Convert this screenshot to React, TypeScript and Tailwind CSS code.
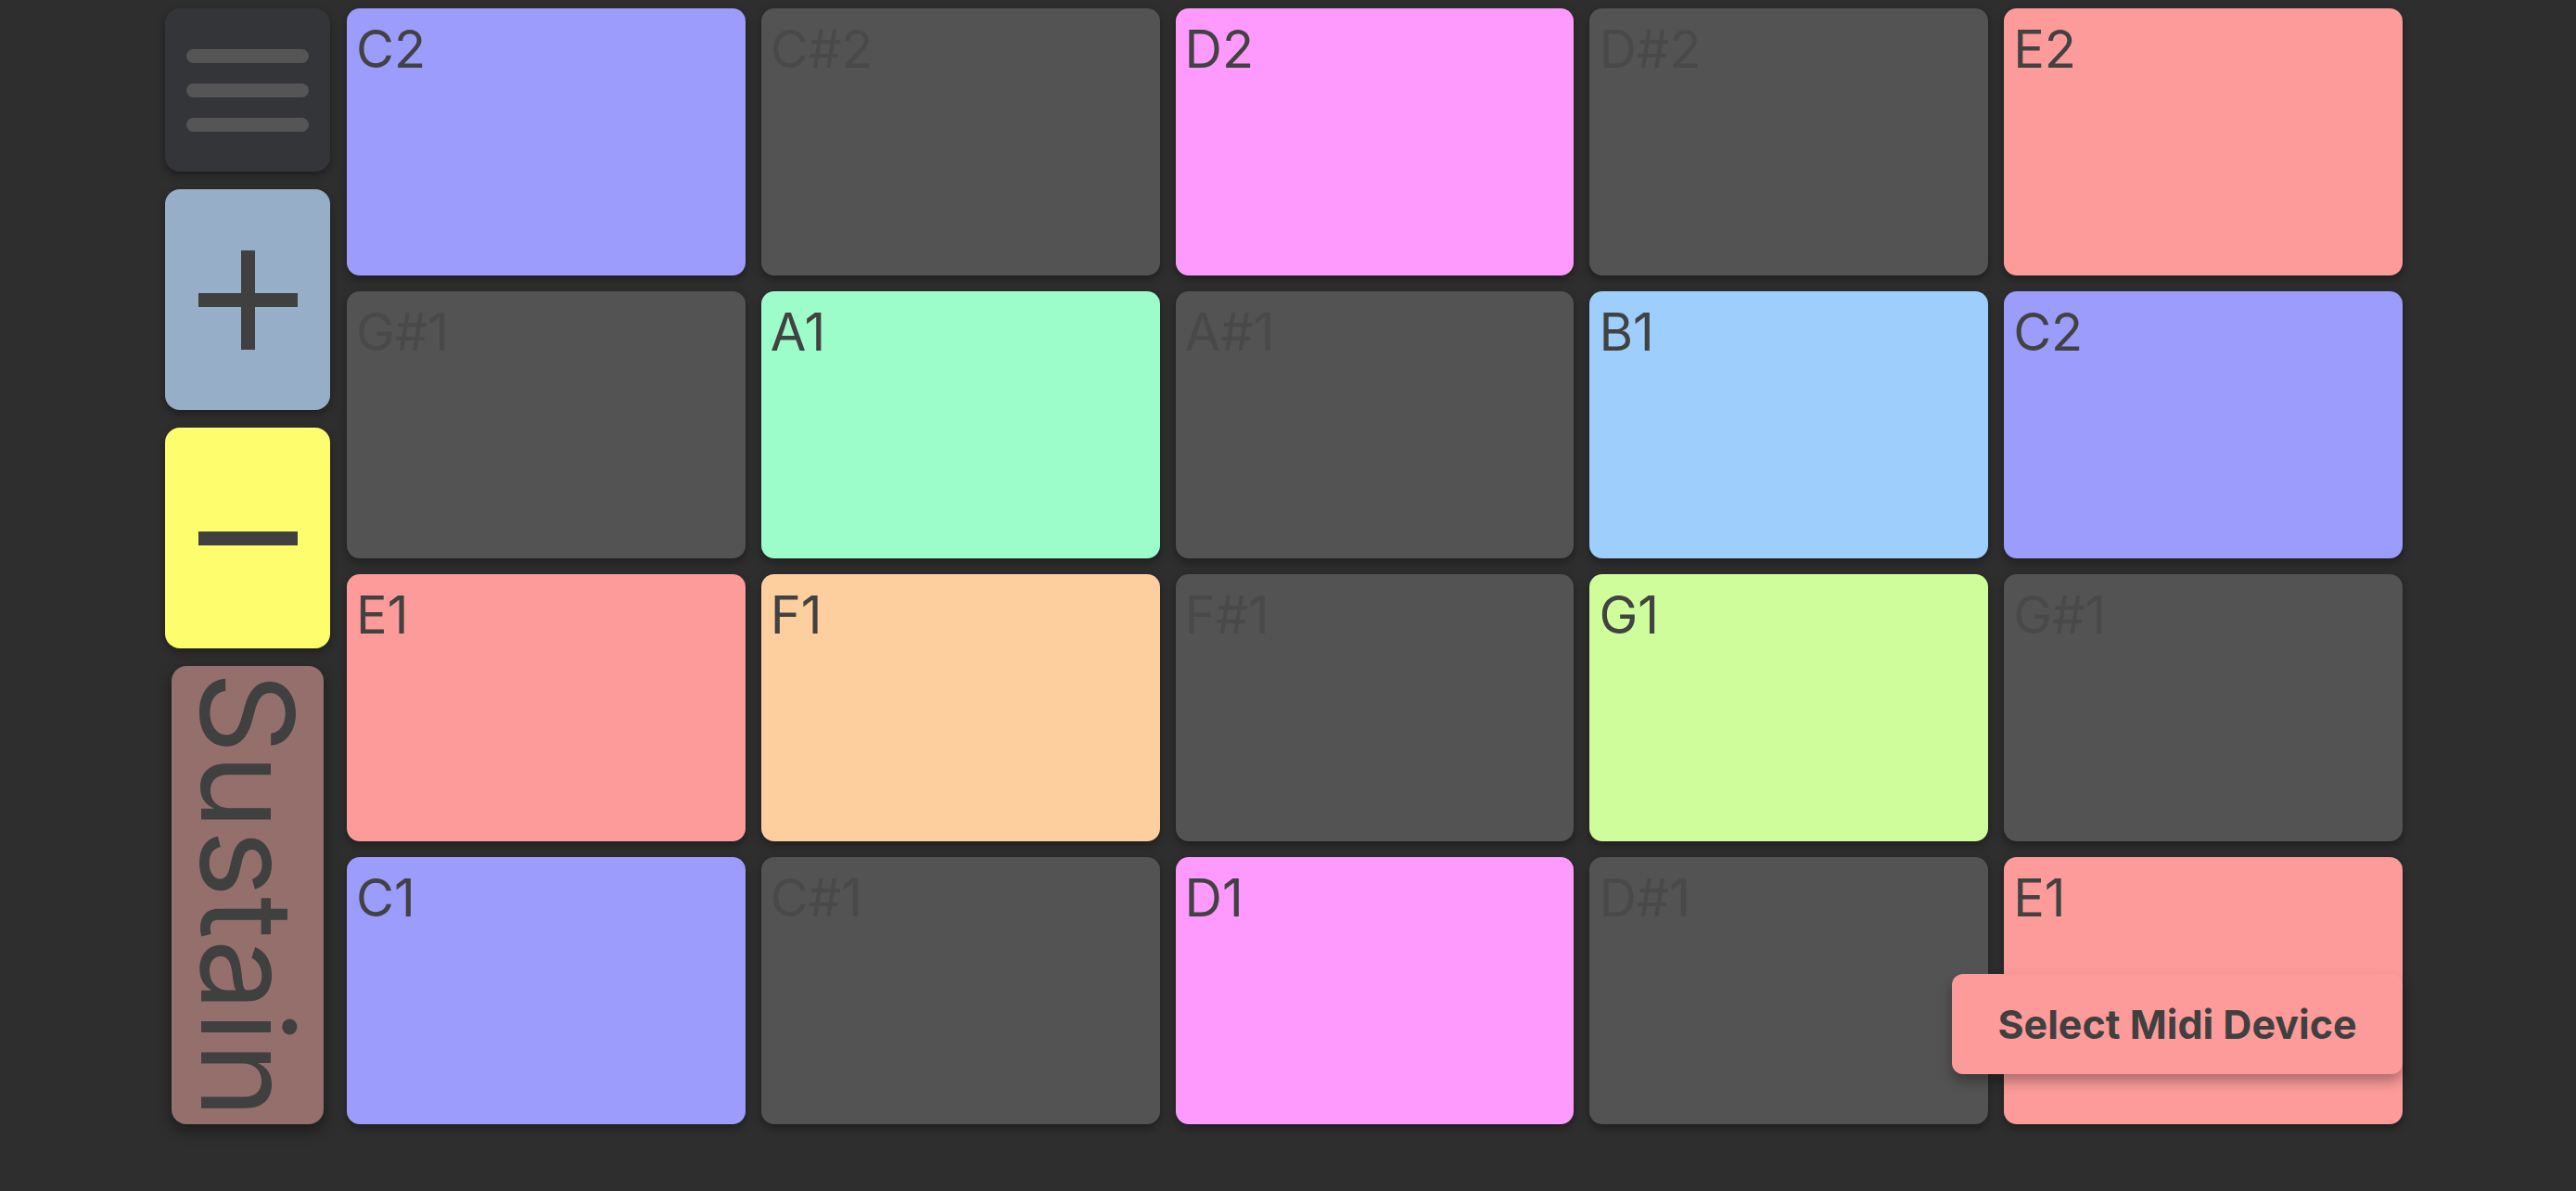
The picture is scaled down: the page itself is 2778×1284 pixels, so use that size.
import React from "react";

type Pad = { note: string; color: string | null };

const C = "bg-[#9b9cfb]";
const D = "bg-[#fe9afe]";
const E = "bg-[#fd9b9b]";
const F = "bg-[#fdcf9f]";
const G = "bg-[#cffd9b]";
const A = "bg-[#9cfcca]";
const B = "bg-[#9dcefc]";

const rows: Pad[][] = [
  [
    { note: "C2", color: C },
    { note: "C#2", color: null },
    { note: "D2", color: D },
    { note: "D#2", color: null },
    { note: "E2", color: E },
  ],
  [
    { note: "G#1", color: null },
    { note: "A1", color: A },
    { note: "A#1", color: null },
    { note: "B1", color: B },
    { note: "C2", color: C },
  ],
  [
    { note: "E1", color: E },
    { note: "F1", color: F },
    { note: "F#1", color: null },
    { note: "G1", color: G },
    { note: "G#1", color: null },
  ],
  [
    { note: "C1", color: C },
    { note: "C#1", color: null },
    { note: "D1", color: D },
    { note: "D#1", color: null },
    { note: "E1", color: E },
  ],
];

function PadButton({ pad }: { pad: Pad }) {
  const lit = pad.color !== null;
  return (
    <div
      className={`h-[288px] rounded-[14px] px-[10px] py-[8px] shadow-[0_4px_10px_rgba(0,0,0,0.35)] ${
        lit ? `${pad.color} text-[#424242]` : "bg-[#535353] text-[#494949]"
      }`}
    >
      <span className="text-[56px] leading-[72px]">{pad.note}</span>
    </div>
  );
}

export default function App() {
  return (
    <div
      className="h-[1284px] w-full bg-[#2e2e2e] pt-[9px]"
      style={{ fontFamily: "Inter, 'Liberation Sans', sans-serif" }}
    >
      <div className="ml-[178px] flex w-[2413px] gap-[18px]">
        {/* side controls */}
        <div className="flex w-[178px] flex-col gap-[19px]">
          <button className="flex h-[176px] flex-col items-center gap-[22px] rounded-[16px] bg-[#343538] pt-[44px] shadow-[0_4px_10px_rgba(0,0,0,0.35)]">
            <span className="h-[15px] w-[132px] rounded-full bg-[#555555]" />
            <span className="h-[15px] w-[132px] rounded-full bg-[#555555]" />
            <span className="h-[15px] w-[132px] rounded-full bg-[#555555]" />
          </button>
          <button className="flex h-[238px] items-center justify-center rounded-[16px] bg-[#97aec8] shadow-[0_4px_10px_rgba(0,0,0,0.35)]">
            <svg width="107" height="107" viewBox="0 0 107 107" fill="#404040">
              <rect x="0" y="46" width="107" height="15" />
              <rect x="46" y="0" width="15" height="107" />
            </svg>
          </button>
          <button className="flex h-[238px] items-center justify-center rounded-[16px] bg-[#fdfd6e] shadow-[0_4px_10px_rgba(0,0,0,0.35)]">
            <svg width="107" height="15" viewBox="0 0 107 15" fill="#404040">
              <rect x="0" y="0" width="107" height="15" />
            </svg>
          </button>
          <button className="mx-[7px] flex h-[494px] items-center justify-center rounded-[16px] bg-[#946f6c] shadow-[0_6px_16px_rgba(0,0,0,0.45)]">
            <span className="text-[138px] leading-[150px] text-[#404040] [writing-mode:vertical-rl]">
              Sustain
            </span>
          </button>
        </div>

        {/* pad grid */}
        <div className="relative grid flex-1 grid-cols-5 gap-[17px]">
          {rows.flat().map((pad, i) => (
            <PadButton key={i} pad={pad} />
          ))}
          <button className="absolute bottom-[54px] right-0 flex h-[108px] w-[486px] items-center justify-center rounded-[12px] bg-[#fd9b9b] text-[43px] font-bold text-[#404040] shadow-[0_8px_14px_rgba(0,0,0,0.3)]">
            Select Midi Device
          </button>
        </div>
      </div>
    </div>
  );
}
